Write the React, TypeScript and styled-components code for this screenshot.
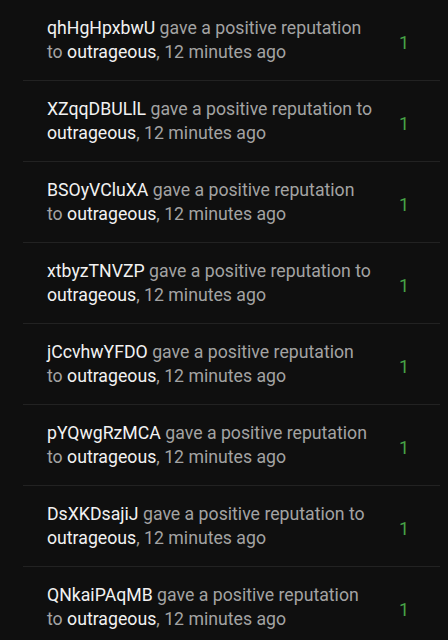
import React, { FC } from "react";
import styled, { createGlobalStyle } from "styled-components";

const GlobalStyle = createGlobalStyle`
  html, body {
    margin: 0;
    padding: 0;
    background: #0f0f0f;
  }
  body {
    font-family: Roboto, "Noto Sans", sans-serif;
    -webkit-font-smoothing: antialiased;
  }
`;

type Activity = {
  user: string;
  target: string;
  time: string;
  points: number;
};

const activities: Activity[] = [
  { user: "qhHgHpxbwU", target: "outrageous", time: "12 minutes ago", points: 1 },
  { user: "XZqqDBULlL", target: "outrageous", time: "12 minutes ago", points: 1 },
  { user: "BSOyVCluXA", target: "outrageous", time: "12 minutes ago", points: 1 },
  { user: "xtbyzTNVZP", target: "outrageous", time: "12 minutes ago", points: 1 },
  { user: "jCcvhwYFDO", target: "outrageous", time: "12 minutes ago", points: 1 },
  { user: "pYQwgRzMCA", target: "outrageous", time: "12 minutes ago", points: 1 },
  { user: "DsXKDsajiJ", target: "outrageous", time: "12 minutes ago", points: 1 },
  { user: "QNkaiPAqMB", target: "outrageous", time: "12 minutes ago", points: 1 },
];

const Page = styled.div`
  min-height: 640px;
  background: #0f0f0f;
  padding: 0 8px 0 23px;
  box-sizing: border-box;
`;

const List = styled.ul`
  list-style: none;
  margin: 0;
  padding: 0;
`;

const Row = styled.li`
  display: flex;
  align-items: center;
  padding: 16px 16px 16px 24px;
  border-bottom: 1px solid #222222;
`;

const Text = styled.div`
  flex: 1;
  max-width: 326px;
  font-size: 17.7px;
  line-height: 24px;
  color: #a3a3a3;
`;

const Name = styled.span`
  color: #f2f2f2;
`;

const Points = styled.div`
  margin-left: auto;
  width: 40px;
  text-align: center;
  font-size: 18px;
  color: #47a447;
  padding-top: 4px;
`;

const ActivityRow: FC<{ activity: Activity }> = ({ activity }) => (
  <Row>
    <Text>
      <Name>{activity.user}</Name> gave a positive reputation to <Name>{activity.target}</Name>, {activity.time}
    </Text>
    <Points>{activity.points}</Points>
  </Row>
);

const App: FC = () => (
  <Page>
    <GlobalStyle />
    <List>
      {activities.map(a => (
        <ActivityRow key={a.user} activity={a} />
      ))}
    </List>
  </Page>
);

export default App;
